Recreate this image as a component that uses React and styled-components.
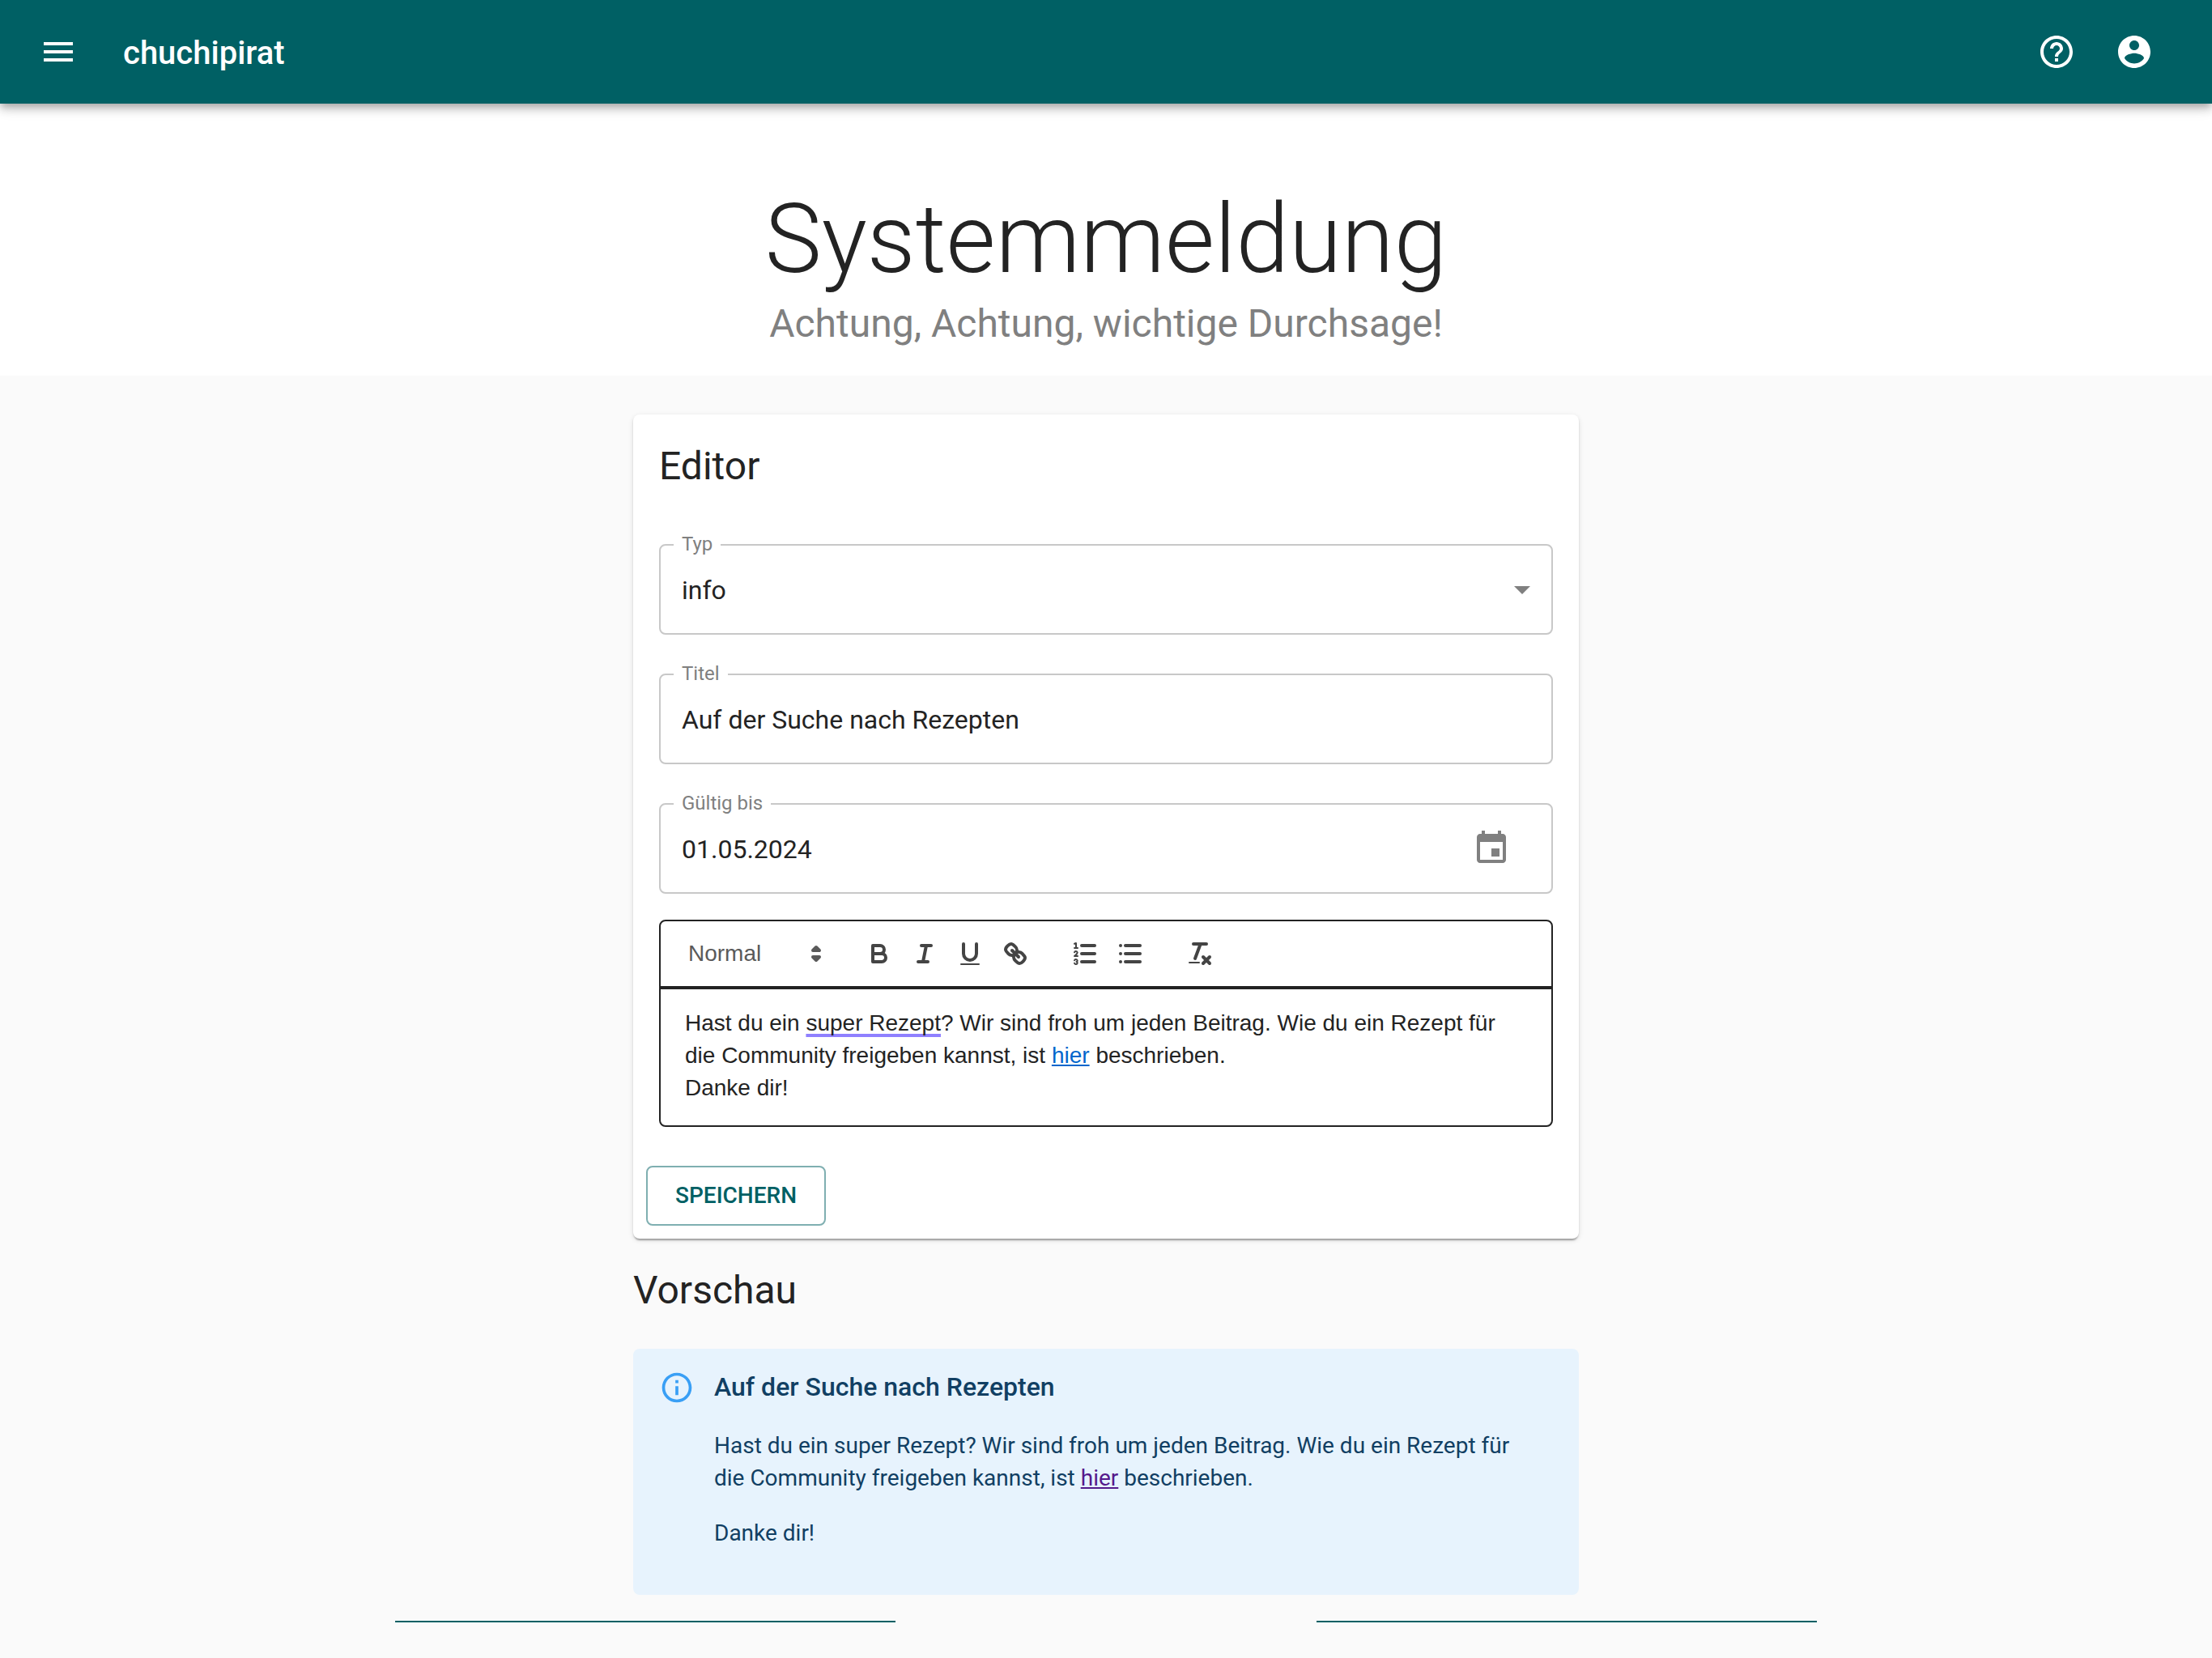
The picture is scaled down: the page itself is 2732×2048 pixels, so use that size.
import React from "react";
import styled, { createGlobalStyle } from "styled-components";

const color = {
  primary: "#006064",
  text: "#232323",
  muted: "#808080",
  outline: "#c8c8c8",
  page: "#fafafa",
  tool: "#444444",
  infoBg: "#e7f3fd",
  infoText: "#113f63",
  infoIcon: "#399ff5",
};

const GlobalStyle = createGlobalStyle`
  *, *::before, *::after { box-sizing: border-box; }
  body {
    margin: 0;
    background: ${color.page};
    color: ${color.text};
    font-family: Roboto, "Liberation Sans", sans-serif;
    font-size: 28px;
    line-height: 40px;
  }
  input, select, button { font: inherit; color: inherit; }
`;

const Page = styled.div`
  display: flex;
  flex-direction: column;
  min-height: 100vh;
`;

const AppBar = styled.header`
  position: relative;
  z-index: 1;
  display: flex;
  align-items: center;
  height: 128px;
  padding: 0 48px;
  background: ${color.primary};
  color: #fff;
  box-shadow:
    0 4px 8px -2px rgba(0, 0, 0, 0.2),
    0 8px 10px 0 rgba(0, 0, 0, 0.14),
    0 2px 20px 0 rgba(0, 0, 0, 0.12);
`;

const IconButton = styled.button`
  display: flex;
  padding: ${(p) => (p.$compact ? "16px" : "24px")};
  border: 0;
  border-radius: 50%;
  background: none;
  color: inherit;
  cursor: pointer;
`;

const MenuButton = styled(IconButton)`
  margin-left: -24px;
  margin-right: 32px;
`;

const CalendarButton = styled(IconButton)`
  margin-right: 34px;
  color: ${color.muted};
`;

const Brand = styled.div`
  flex: 1;
  padding-top: 4px;
  font-size: 40px;
  font-weight: 500;
  line-height: 64px;
`;

const Icon = styled.svg`
  display: block;
  flex: none;
  width: ${(p) => p.$size || 48}px;
  height: ${(p) => p.$size || 48}px;
  fill: currentColor;
`;

const Hero = styled.section`
  padding: 96px 48px 32px;
  background: #fff;
  text-align: center;
`;

const HeroTitle = styled.h1`
  margin: 0;
  font-size: 118px;
  font-weight: 300;
  line-height: 144px;
`;

const HeroSubtitle = styled.p`
  margin: 0;
  color: ${color.muted};
  font-size: 48px;
  line-height: 64px;
`;

const Content = styled.main`
  display: flex;
  flex-direction: column;
  gap: 32px;
  width: 100%;
  max-width: 1168px;
  margin: 0 auto;
  padding: 48px 0 32px;
`;

const Card = styled.form`
  display: flex;
  flex-direction: column;
  border-radius: 8px;
  background: #fff;
  box-shadow:
    0 4px 2px -2px rgba(0, 0, 0, 0.2),
    0 2px 2px 0 rgba(0, 0, 0, 0.14),
    0 2px 6px 0 rgba(0, 0, 0, 0.12);
`;

const CardContent = styled.div`
  padding: 32px;
`;

const CardActions = styled.div`
  display: flex;
  padding: 16px;
`;

const SectionTitle = styled.h2`
  margin: 0;
  font-size: 48px;
  font-weight: 400;
  line-height: 64px;
`;

const Fields = styled.div`
  display: flex;
  flex-direction: column;
  gap: 48px;
  margin: 64px 0 32px;
`;

const Field = styled.div`
  position: relative;
  display: flex;
  align-items: center;
  height: 112px;
  border: 2px solid ${color.outline};
  border-radius: 8px;
`;

const FieldLabel = styled.label`
  position: absolute;
  top: -18px;
  left: 16px;
  padding: 0 10px;
  background: #fff;
  color: ${color.muted};
  font-size: 24px;
  line-height: 32px;
`;

const TextInput = styled.input`
  flex: 1;
  min-width: 0;
  height: 100%;
  padding: 2px 26px 0;
  border: 0;
  outline: 0;
  background: none;
  font-size: 32px;
`;

const SelectInput = styled.select`
  flex: 1;
  height: 100%;
  padding: 2px 76px 0 26px;
  border: 0;
  outline: 0;
  appearance: none;
  background: none;
  font-size: 32px;
`;

const SelectArrow = styled(Icon)`
  position: absolute;
  right: 12px;
  color: ${color.muted};
  pointer-events: none;
`;

const RichText = styled.div`
  border: 2px solid ${color.text};
  border-radius: 8px;
  font-family: "Liberation Sans", Arial, sans-serif;
`;

const Toolbar = styled.div`
  display: flex;
  gap: 30px;
  padding: 16px;
  border-bottom: 4px solid ${color.text};
`;

const ToolGroup = styled.div`
  position: relative;
  display: flex;
  align-items: center;
`;

const FormatSelect = styled.select`
  width: 196px;
  height: 48px;
  padding: 0 38px 0 18px;
  border: 0;
  outline: 0;
  appearance: none;
  background: none;
  color: #5a5a5a;
`;

const FormatArrow = styled.span`
  position: absolute;
  right: 2px;
  color: #5a5a5a;
  pointer-events: none;
`;

const ToolButton = styled.button`
  padding: 6px 10px;
  border: 0;
  background: none;
  color: ${color.tool};
  cursor: pointer;
`;

const ToolSvg = styled.svg`
  display: block;
  width: 36px;
  height: 36px;
  fill: none;
  stroke: currentColor;
  stroke-width: 2;
  stroke-linecap: round;
  stroke-linejoin: round;

  .thin { stroke-width: 1; }
  .fill { fill: currentColor; stroke: none; }
  .solid { fill: currentColor; }
`;

const EditorBody = styled.div`
  padding: 22px 28px 26px 30px;
  outline: 0;

  p { margin: 0; }
  a { color: #0066cc; }
`;

const Grammar = styled.span`
  text-decoration: underline 4px #8f80ff;
  text-underline-offset: 4px;
  text-decoration-skip-ink: none;
`;

const SaveButton = styled.button`
  min-width: 222px;
  padding: 15px 30px;
  border: 2px solid rgba(0, 96, 100, 0.5);
  border-radius: 8px;
  background: none;
  color: ${color.primary};
  font-weight: 500;
  text-transform: uppercase;
  cursor: pointer;
`;

const Alert = styled.div`
  display: flex;
  gap: 24px;
  margin-top: 8px;
  padding: 24px 64px 28px 32px;
  border-radius: 8px;
  background: ${color.infoBg};
  color: ${color.infoText};
`;

const AlertIcon = styled.div`
  padding-top: 2px;
  color: ${color.infoIcon};
`;

const AlertMessage = styled.div`
  flex: 1;

  p { margin: 28px 0 0; }
  p:last-child { margin-bottom: 28px; }
  a { color: #551a8b; }
`;

const AlertTitle = styled.div`
  padding-bottom: 2px;
  font-size: 32px;
  font-weight: 500;
  line-height: 46px;
`;

const Footer = styled.footer`
  display: grid;
  grid-template-columns: 1fr 1fr;
  gap: 520px;
  width: 100%;
  max-width: 1756px;
  margin: 0 auto;
`;

const Rule = styled.hr`
  width: 100%;
  margin: 0;
  border: 0;
  border-top: 2px solid ${color.primary};
`;

const tools = [
  [
    {
      label: "Fett",
      icon: (
        <>
          <path d="M5,4H9.5A2.5,2.5,0,0,1,12,6.5v0A2.5,2.5,0,0,1,9.5,9H5V4Z" />
          <path d="M5,9h5.5A2.5,2.5,0,0,1,13,11.5v0A2.5,2.5,0,0,1,10.5,14H5V9Z" />
        </>
      ),
    },
    {
      label: "Kursiv",
      icon: (
        <>
          <line x1="7" x2="13" y1="4" y2="4" />
          <line x1="5" x2="11" y1="14" y2="14" />
          <line x1="8" x2="10" y1="14" y2="4" />
        </>
      ),
    },
    {
      label: "Unterstrichen",
      icon: (
        <>
          <path d="M5,3V9a4.012,4.012,0,0,0,4,4H9a4.012,4.012,0,0,0,4-4V3" />
          <rect className="fill" height="1" rx="0.5" width="12" x="3" y="15" />
        </>
      ),
    },
    {
      label: "Link",
      icon: (
        <>
          <line x1="7" x2="11" y1="7" y2="11" />
          <path d="M8.9,4.577a3.476,3.476,0,0,1,.36,4.679A3.476,3.476,0,0,1,4.577,8.9C3.185,7.5,2.035,6.4,4.217,4.217S7.5,3.185,8.9,4.577Z" />
          <path d="M13.423,9.1a3.476,3.476,0,0,0-4.679-.36,3.476,3.476,0,0,0,.36,4.679c1.392,1.392,2.5,2.542,4.679.36S14.815,10.5,13.423,9.1Z" />
        </>
      ),
    },
  ],
  [
    {
      label: "Nummerierte Liste",
      icon: (
        <>
          <line x1="7" x2="15" y1="4" y2="4" />
          <line x1="7" x2="15" y1="9" y2="9" />
          <line x1="7" x2="15" y1="14" y2="14" />
          <line className="thin" x1="2.5" x2="4.5" y1="5.5" y2="5.5" />
          <path className="thin" d="M2.5,2.9L3.5,2.5V5.5" />
          <path className="thin" d="M4.5,10.5h-2c0-.234,1.85-1.076,1.85-2.234A0.959,0.959,0,0,0,2.5,8.156" />
          <path className="thin" d="M2.5,14.846a0.959,0.959,0,0,0,1.85-.109A0.7,0.7,0,0,0,3.75,14a0.688,0.688,0,0,0,.6-0.736,0.959,0.959,0,0,0-1.85-.109" />
        </>
      ),
    },
    {
      label: "Aufzählung",
      icon: (
        <>
          <line x1="6" x2="15" y1="4" y2="4" />
          <line x1="6" x2="15" y1="9" y2="9" />
          <line x1="6" x2="15" y1="14" y2="14" />
          <line x1="3" x2="3" y1="4" y2="4" />
          <line x1="3" x2="3" y1="9" y2="9" />
          <line x1="3" x2="3" y1="14" y2="14" />
        </>
      ),
    },
  ],
  [
    {
      label: "Formatierung entfernen",
      icon: (
        <>
          <line x1="5" x2="13" y1="3" y2="3" />
          <line x1="6" x2="9.35" y1="12" y2="3" />
          <line x1="11" x2="15" y1="11" y2="15" />
          <line x1="15" x2="11" y1="11" y2="15" />
          <rect className="fill" height="1" rx="0.5" width="7" x="2" y="14" />
        </>
      ),
    },
  ],
];

export default function App() {
  return (
    <Page>
      <GlobalStyle />
      <AppBar>
        <MenuButton type="button" aria-label="Menü">
          <Icon viewBox="0 0 24 24">
            <path d="M3 18h18v-2H3v2zm0-5h18v-2H3v2zm0-7v2h18V6H3z" />
          </Icon>
        </MenuButton>
        <Brand>chuchipirat</Brand>
        <IconButton type="button" aria-label="Hilfe">
          <Icon viewBox="0 0 24 24">
            <path d="M11 18h2v-2h-2v2zm1-16C6.48 2 2 6.48 2 12s4.48 10 10 10 10-4.48 10-10S17.52 2 12 2zm0 18c-4.41 0-8-3.59-8-8s3.59-8 8-8 8 3.59 8 8-3.59 8-8 8zm0-14c-2.21 0-4 1.79-4 4h2c0-1.1.9-2 2-2s2 .9 2 2c0 2-3 1.75-3 5h2c0-2.25 3-2.5 3-5 0-2.21-1.79-4-4-4z" />
          </Icon>
        </IconButton>
        <IconButton type="button" aria-label="Profil">
          <Icon viewBox="0 0 24 24">
            <path d="M12 2C6.48 2 2 6.48 2 12s4.48 10 10 10 10-4.48 10-10S17.52 2 12 2zm0 3c1.66 0 3 1.34 3 3s-1.34 3-3 3-3-1.34-3-3 1.34-3 3-3zm0 14.2c-2.5 0-4.71-1.28-6-3.22.03-1.99 4-3.08 6-3.08 1.99 0 5.97 1.09 6 3.08-1.29 1.94-3.5 3.22-6 3.22z" />
          </Icon>
        </IconButton>
      </AppBar>

      <Hero>
        <HeroTitle>Systemmeldung</HeroTitle>
        <HeroSubtitle>Achtung, Achtung, wichtige Durchsage!</HeroSubtitle>
      </Hero>

      <Content>
        <Card onSubmit={(e) => e.preventDefault()}>
          <CardContent>
            <SectionTitle>Editor</SectionTitle>
            <Fields>
              <Field>
                <FieldLabel htmlFor="type">Typ</FieldLabel>
                <SelectInput id="type" defaultValue="info">
                  <option value="info">info</option>
                </SelectInput>
                <SelectArrow viewBox="0 0 24 24" aria-hidden="true">
                  <path d="M7 10l5 5 5-5z" />
                </SelectArrow>
              </Field>
              <Field>
                <FieldLabel htmlFor="title">Titel</FieldLabel>
                <TextInput id="title" type="text" defaultValue="Auf der Suche nach Rezepten" />
              </Field>
              <Field>
                <FieldLabel htmlFor="valid-to">Gültig bis</FieldLabel>
                <TextInput id="valid-to" type="text" defaultValue="01.05.2024" />
                <CalendarButton $compact type="button" aria-label="Datum wählen">
                  <Icon viewBox="0 0 24 24">
                    <path d="M17 12h-5v5h5v-5zM16 1v2H8V1H6v2H5c-1.11 0-1.99.9-1.99 2L3 19c0 1.1.89 2 2 2h14c1.1 0 2-.9 2-2V5c0-1.1-.9-2-2-2h-1V1h-2zm3 18H5V8h14v11z" />
                  </Icon>
                </CalendarButton>
              </Field>
            </Fields>

            <RichText>
              <Toolbar role="toolbar" aria-label="Formatierung">
                <ToolGroup>
                  <FormatSelect aria-label="Absatzformat" defaultValue="normal">
                    <option value="normal">Normal</option>
                  </FormatSelect>
                  <FormatArrow>
                    <ToolSvg viewBox="0 0 18 18" aria-hidden="true">
                      <polygon className="solid" points="7 11 9 13 11 11 7 11" />
                      <polygon className="solid" points="7 7 9 5 11 7 7 7" />
                    </ToolSvg>
                  </FormatArrow>
                </ToolGroup>
                {tools.map((group) => (
                  <ToolGroup key={group[0].label}>
                    {group.map((tool) => (
                      <ToolButton key={tool.label} type="button" aria-label={tool.label}>
                        <ToolSvg viewBox="0 0 18 18">{tool.icon}</ToolSvg>
                      </ToolButton>
                    ))}
                  </ToolGroup>
                ))}
              </Toolbar>
              <EditorBody
                role="textbox"
                aria-multiline="true"
                aria-label="Text"
                contentEditable
                suppressContentEditableWarning
                spellCheck={false}
              >
                <p>
                  Hast du ein <Grammar>super Rezept</Grammar>? Wir sind froh um jeden Beitrag. Wie
                  du ein Rezept für die Community freigeben kannst, ist <a href="#hier">hier</a>{" "}
                  beschrieben.
                </p>
                <p>Danke dir!</p>
              </EditorBody>
            </RichText>
          </CardContent>
          <CardActions>
            <SaveButton type="submit">Speichern</SaveButton>
          </CardActions>
        </Card>

        <SectionTitle>Vorschau</SectionTitle>

        <Alert role="status">
          <AlertIcon>
            <Icon $size={44} viewBox="0 0 24 24" aria-hidden="true">
              <path d="M11 7h2v2h-2zm0 4h2v6h-2zm1-9C6.48 2 2 6.48 2 12s4.48 10 10 10 10-4.48 10-10S17.52 2 12 2zm0 18c-4.41 0-8-3.59-8-8s3.59-8 8-8 8 3.59 8 8-3.59 8-8 8z" />
            </Icon>
          </AlertIcon>
          <AlertMessage>
            <AlertTitle>Auf der Suche nach Rezepten</AlertTitle>
            <p>
              Hast du ein super Rezept? Wir sind froh um jeden Beitrag. Wie du ein Rezept für die
              Community freigeben kannst, ist <a href="#hier">hier</a> beschrieben.
            </p>
            <p>Danke dir!</p>
          </AlertMessage>
        </Alert>
      </Content>

      <Footer>
        <Rule />
        <Rule />
      </Footer>
    </Page>
  );
}
